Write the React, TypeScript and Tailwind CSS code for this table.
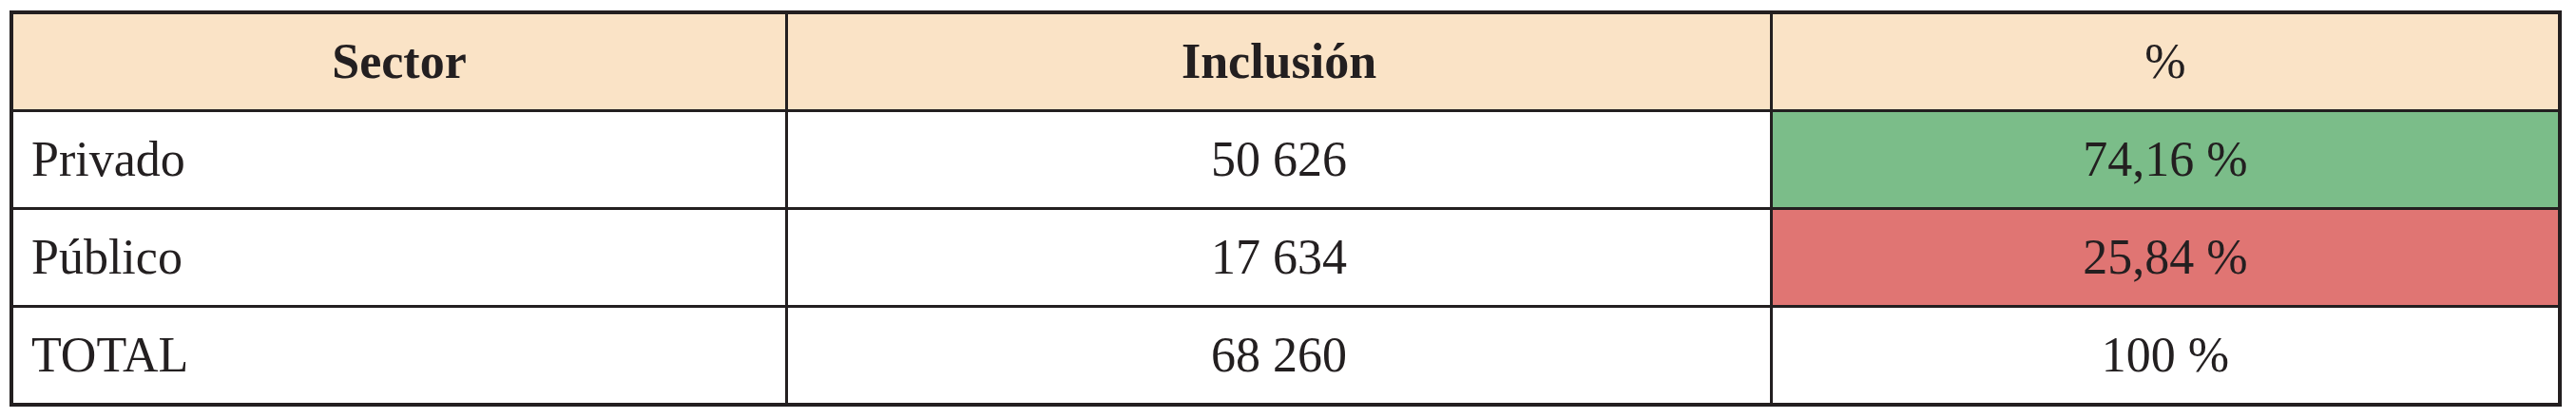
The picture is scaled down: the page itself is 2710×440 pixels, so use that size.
import React from "react";

const font = { fontFamily: '"Liberation Serif", "Times New Roman", serif' };

export default function App() {
  const cellBase = "flex items-center text-[52px] leading-none text-[#231F20]";
  return (
    <div className="w-[2710px] h-[440px] bg-white pt-[11px] pl-[10px]" style={font}>
      <div className="w-[2685px] border-[4px] border-[#231F20] grid grid-cols-[815px_1036px_826px] grid-rows-[103px_103px_103px_100px]">
        {/* header */}
        <div className={`${cellBase} justify-center font-bold bg-[#FAE3C6] border-r-[3px] border-b-[3px] border-[#231F20]`}>Sector</div>
        <div className={`${cellBase} justify-center font-bold bg-[#FAE3C6] border-r-[3px] border-b-[3px] border-[#231F20]`}>Inclusión</div>
        <div className={`${cellBase} justify-center bg-[#FAE3C6] border-b-[3px] border-[#231F20]`}>%</div>
        {/* row 1 */}
        <div className={`${cellBase} pl-[19px] bg-white border-r-[3px] border-b-[3px] border-[#231F20]`}>Privado</div>
        <div className={`${cellBase} justify-center bg-white border-r-[3px] border-b-[3px] border-[#231F20]`}>50 626</div>
        <div className={`${cellBase} justify-center bg-[#7BBD89] border-b-[3px] border-[#231F20]`}>74,16 %</div>
        {/* row 2 */}
        <div className={`${cellBase} pl-[19px] bg-white border-r-[3px] border-b-[3px] border-[#231F20]`}>Público</div>
        <div className={`${cellBase} justify-center bg-white border-r-[3px] border-b-[3px] border-[#231F20]`}>17 634</div>
        <div className={`${cellBase} justify-center bg-[#E07573] border-b-[3px] border-[#231F20]`}>25,84 %</div>
        {/* row 3 */}
        <div className={`${cellBase} pl-[19px] bg-white border-r-[3px] border-[#231F20]`}>TOTAL</div>
        <div className={`${cellBase} justify-center bg-white border-r-[3px] border-[#231F20]`}>68 260</div>
        <div className={`${cellBase} justify-center bg-white`}>100 %</div>
      </div>
    </div>
  );
}
